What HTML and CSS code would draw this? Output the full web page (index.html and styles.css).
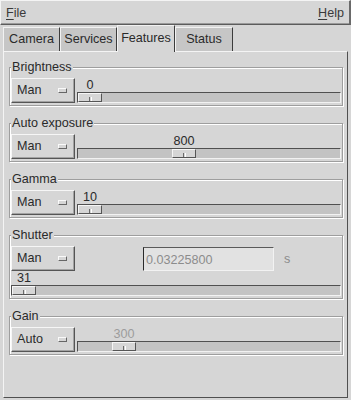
FILE: index.html
```html
<!DOCTYPE html>
<html>
<head>
    <title>Camera Features</title>
    <link rel="stylesheet" href="styles.css">
</head>
<body>
    <div class="window">
        <div class="menubar">
            <span class="menu"><u>F</u>ile</span>
            <span class="menu"><u>H</u>elp</span>
        </div>

        <div class="tabs">
            <div class="tab">Camera</div>
            <div class="tab">Services</div>
            <div class="tab active">Features</div>
            <div class="tab wide">Status</div>
        </div>

        <div class="panel">
            <fieldset class="group">
                <legend>Brightness</legend>
                <div class="row">
                    <div class="option">Man<span class="indicator"></span></div>
                    <div class="scale">
                        <div class="value" style="margin-left: 1px">0</div>
                        <div class="trough"><div class="thumb" style="margin-left: 0px"></div></div>
                    </div>
                </div>
            </fieldset>

            <fieldset class="group">
                <legend>Auto exposure</legend>
                <div class="row">
                    <div class="option">Man<span class="indicator"></span></div>
                    <div class="scale">
                        <div class="value" style="margin-left: 95px">800</div>
                        <div class="trough"><div class="thumb" style="margin-left: 94px"></div></div>
                    </div>
                </div>
            </fieldset>

            <fieldset class="group">
                <legend>Gamma</legend>
                <div class="row">
                    <div class="option">Man<span class="indicator"></span></div>
                    <div class="scale">
                        <div class="value" style="margin-left: 1px">10</div>
                        <div class="trough"><div class="thumb" style="margin-left: 0px"></div></div>
                    </div>
                </div>
            </fieldset>

            <fieldset class="group">
                <legend>Shutter</legend>
                <div class="row">
                    <div class="option">Man<span class="indicator"></span></div>
                    <div class="entry">0.03225800</div>
                    <span class="unit">s</span>
                </div>
                <div class="scale full">
                    <div class="value" style="margin-left: 1px">31</div>
                    <div class="trough"><div class="thumb" style="margin-left: 0px"></div></div>
                </div>
            </fieldset>

            <fieldset class="group">
                <legend>Gain</legend>
                <div class="row">
                    <div class="option">Auto<span class="indicator"></span></div>
                    <div class="scale disabled">
                        <div class="value" style="margin-left: 35px">300</div>
                        <div class="trough"><div class="thumb" style="margin-left: 34px"></div></div>
                    </div>
                </div>
            </fieldset>
        </div>
    </div>
</body>
</html>
```

FILE: styles.css
```css
body {
    margin: 0;
    font-family: "Liberation Sans", Arial, sans-serif;
    font-size: 12.6px;
    color: #1c1c1c;
    background-color: #d6d6d6;
}

.window {
    width: 351px;
    height: 400px;
    display: flex;
    flex-direction: column;
    background-color: #d6d6d6;
}

/* menu bar */

.menubar {
    height: 25px;
    box-sizing: border-box;
    display: flex;
    justify-content: space-between;
    align-items: center;
    padding: 0 5px 0 5px;
    border-top: 1px solid #f4f4f4;
    border-left: 1px solid #f4f4f4;
    border-right: 2px solid #6a6a6a;
    border-bottom: 1px solid #5c5c5c;
    box-shadow: inset 0 -1px 0 #9a9a9a;
    color: #3a3a3a;
}

.menu u {
    text-decoration: underline;
    text-underline-offset: 2px;
}

/* notebook tabs */

.tabs {
    height: 26px;
    display: flex;
    align-items: flex-end;
    padding-left: 3px;
}

.tab {
    width: 57px;
    height: 24px;
    box-sizing: border-box;
    display: flex;
    align-items: center;
    justify-content: center;
    padding-bottom: 1px;
    border-top: 1px solid #f2f2f2;
    border-left: 1px solid #f2f2f2;
    border-right: 1px solid #3c3c3c;
    background-color: #c6c6c6;
    color: #2a2a2a;
}

.tab.wide {
    width: 58px;
}

.tab.active {
    width: 58px;
    height: 27px;
    margin-bottom: -1px;
    padding-bottom: 3px;
    background-color: #d6d6d6;
    position: relative;
    z-index: 1;
}

/* page */

.panel {
    flex: 1;
    margin: 0 3px 2px 3px;
    padding: 8px 4px 0 5px;
    border: 1px solid;
    border-color: #f4f4f4 #505050 #505050 #f4f4f4;
}

.group {
    margin: 0 0 10px 0;
    padding: 4px 1px 2px 1px;
    min-width: 0;
    border: 1px solid #9e9e9e;
    box-shadow: inset 1px 1px 0 #fff, 1px 1px 0 #fff;
}

.group legend {
    padding: 0 1px;
    line-height: 14px;
    background-color: #d6d6d6;
    color: #2a2a2a;
}

.row {
    display: flex;
    align-items: flex-end;
    gap: 2px;
}

/* option menu button */

.option {
    width: 64px;
    height: 25px;
    flex: none;
    box-sizing: border-box;
    display: flex;
    align-items: center;
    justify-content: space-between;
    padding: 0 7px 1px 5px;
    border: 1px solid;
    border-color: #f6f6f6 #555 #555 #f6f6f6;
    box-shadow: inset -1px -1px 0 #a2a2a2;
    color: #2a2a2a;
}

.indicator {
    width: 9px;
    height: 5px;
    margin-top: 1px;
    box-sizing: border-box;
    border: 1px solid;
    border-color: #fafafa #666 #666 #fafafa;
}

/* scale */

.scale {
    flex: 1;
    display: flex;
    flex-direction: column;
}

.value {
    width: 24px;
    text-align: center;
    line-height: 14px;
    color: #2a2a2a;
}

.scale.disabled .value {
    color: #9c9c9c;
}

.trough {
    height: 11px;
    box-sizing: border-box;
    border: 1px solid;
    border-color: #505050 #f2f2f2 #f2f2f2 #505050;
    background-color: #c3c3c3;
}

.thumb {
    width: 24px;
    height: 9px;
    box-sizing: border-box;
    display: flex;
    justify-content: center;
    align-items: flex-end;
    border: 1px solid;
    border-color: #f6f6f6 #555 #555 #f6f6f6;
    background-color: #d6d6d6;
}

.thumb::after {
    content: "";
    width: 1px;
    height: 4px;
    border-left: 1px solid #6a6a6a;
    border-right: 1px solid #fff;
}

/* entry */

.entry {
    width: 131px;
    height: 24px;
    box-sizing: border-box;
    margin-left: 66px;
    padding: 1px 0 0 2px;
    display: flex;
    align-items: center;
    border: 1px solid;
    border-color: #5a5a5a #f2f2f2 #f2f2f2 #2a2a2a;
    background-color: #e2e2e2;
    color: #8c8c8c;
}

.unit {
    align-self: center;
    margin-left: 8px;
    color: #8c8c8c;
}
```
